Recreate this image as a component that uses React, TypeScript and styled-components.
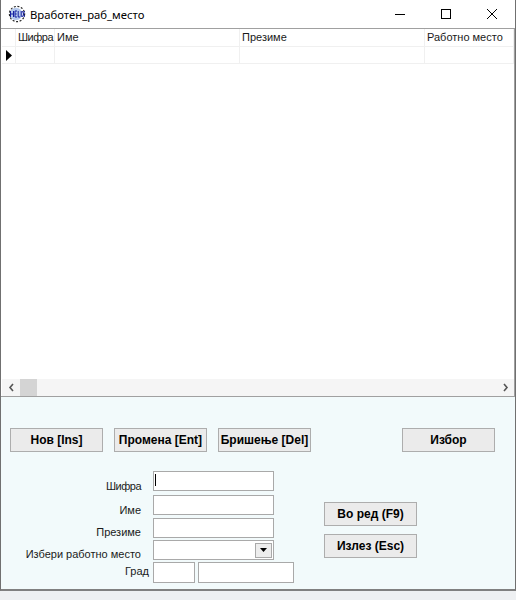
import React from "react";
import styled, { createGlobalStyle } from "styled-components";

const Global = createGlobalStyle`
  html, body { margin: 0; padding: 0; background: #f0f1f3; }
  #root { width: 516px; height: 600px; overflow: hidden; }
  * { box-sizing: border-box; }
`;

const Page = styled.div`
  width: 516px;
  height: 600px;
  background: linear-gradient(#c9ccd0 0, #e6e8ea 4px, #eef0f2 9px);
  font-family: "Liberation Sans", Arial, sans-serif;
`;

const Win = styled.div`
  width: 516px;
  height: 591px;
  display: flex;
  flex-direction: column;
  background: #fff;
  border-left: 1px solid #707070;
  border-right: 1px solid #707070;
  border-bottom: 2px solid #808080;
`;

const TitleBar = styled.div`
  height: 28px;
  flex: none;
  display: flex;
  align-items: center;
  padding-left: 7px;
  background: #fff;
`;

const TitleText = styled.span`
  font-family: "Noto Sans", "Open Sans", sans-serif;
  font-size: 11.3px;
  color: #000;
  margin-left: 4px;
  margin-top: 1px;
`;

const Controls = styled.div`
  margin-left: auto;
  display: flex;
  height: 28px;
`;

const Ctl = styled.div`
  width: 46px;
  display: flex;
  align-items: center;
  justify-content: center;
`;

const GridBox = styled.div`
  height: 369px;
  flex: none;
  display: flex;
  flex-direction: column;
  border-top: 1px solid #a0a0a0;
  border-bottom: 1px solid #a0a0a0;
  border-right: 1px solid #a0a0a0;
  background: #fff;
`;

const Row = styled.div<{ $h: number }>`
  height: ${(p) => p.$h}px;
  flex: none;
  display: flex;
  border-bottom: 1px solid #f0f0f0;
  margin-left: 1px;
`;

const Cell = styled.div<{ $w: number }>`
  width: ${(p) => p.$w}px;
  flex: none;
  border-right: 1px solid #f0f0f0;
  font-size: 11px;
  line-height: 17px;
  color: #1a1a1a;
  padding-left: 2px;
  white-space: nowrap;
  overflow: hidden;
  display: flex;
  align-items: center;
`;

const RowMarker = styled(Cell)`
  padding-left: 4px;
`;

const Tight = styled.span`
  letter-spacing: -0.5px;
`;

const GridFill = styled.div`
  flex: 1;
`;

const ScrollBar = styled.div`
  height: 17px;
  flex: none;
  background: #f5f5f5;
  display: flex;
  align-items: center;
  margin-left: 1px;
`;

const Arrow = styled.div`
  width: 18px;
  height: 17px;
  display: flex;
  align-items: center;
  justify-content: center;
  flex: none;
`;

const Thumb = styled.div`
  width: 17px;
  height: 17px;
  background: #d4d4d4;
  flex: none;
`;

const Spacer = styled.div`
  flex: 1;
`;

const Panel = styled.div`
  flex: 1;
  background: #f2fafb;
  display: flex;
  flex-direction: column;
  padding: 31px 0 0 9px;
`;

const TopButtons = styled.div`
  display: flex;
  gap: 11px;
`;

const Btn = styled.div<{ $ml?: number }>`
  width: 93px;
  height: 24px;
  flex: none;
  margin-left: ${(p) => p.$ml ?? 0}px;
  background: #ebebeb;
  border: 1px solid #adadad;
  display: flex;
  align-items: center;
  justify-content: center;
  font-size: 12px;
  font-weight: 700;
  color: #000;
  white-space: nowrap;
`;

const FormArea = styled.div`
  display: flex;
  margin-top: 19px;
`;

const Fields = styled.div`
  width: 314px;
  flex: none;
  display: flex;
  flex-direction: column;
`;

const FieldRow = styled.div<{ $h: number }>`
  height: ${(p) => p.$h}px;
  display: flex;
  flex: none;
`;

const Label = styled.div<{ $w?: number; $dy?: number }>`
  width: ${(p) => p.$w ?? 131}px;
  flex: none;
  text-align: right;
  font-size: 11px;
  line-height: 13px;
  color: #1a1a1a;
  padding-top: ${(p) => p.$dy ?? 0}px;
  white-space: nowrap;
`;

const Input = styled.div<{ $w: number; $h: number; $ml: number }>`
  width: ${(p) => p.$w}px;
  height: ${(p) => p.$h}px;
  margin-left: ${(p) => p.$ml}px;
  flex: none;
  background: #fff;
  border: 1px solid #a9a9a9;
  display: flex;
  align-items: center;
`;

const Caret = styled.div`
  width: 1px;
  height: 12px;
  background: #000;
  margin: -3px 0 0 1px;
`;

const ComboBtn = styled.div`
  width: 17px;
  height: 15px;
  margin-left: auto;
  margin-right: 1px;
  background: #ededed;
  border: 1px solid #a9a9a9;
  display: flex;
  align-items: center;
  justify-content: center;
`;

const SideButtons = styled.div`
  display: flex;
  flex-direction: column;
  gap: 8px;
  padding-top: 31px;
`;

export default function App() {
  return (
    <Page>
      <Global />
      <Win>
        <TitleBar>
          <svg width="18" height="18" viewBox="0 0 18 18">
            <circle cx="9" cy="9" r="7.6" fill="#fff" stroke="#222" strokeWidth="1.2" strokeDasharray="2 1.6" />
            <circle cx="8" cy="9" r="6.2" fill="#b4c8ec" />
            <path d="M2.5 6V12M5.5 6V12M2.5 9H5.5M7 6V12M7 6H9M7 9H8.7M7 12H9M10.2 6V12H12M13.2 6V12M14.5 6L16.5 12M16.5 6L14.5 12" fill="none" stroke="#1520a0" strokeWidth="1" />
          </svg>
          <TitleText>Вработен_раб_место</TitleText>
          <Controls>
            <Ctl>
              <svg width="10" height="10" viewBox="0 0 10 10"><path d="M0 5.5H10" stroke="#000" strokeWidth="1" /></svg>
            </Ctl>
            <Ctl>
              <svg width="10" height="10" viewBox="0 0 10 10"><rect x="0.5" y="0.5" width="9" height="9" fill="none" stroke="#000" strokeWidth="1" /></svg>
            </Ctl>
            <Ctl>
              <svg width="10" height="10" viewBox="0 0 10 10"><path d="M0 0L10 10M10 0L0 10" stroke="#000" strokeWidth="1" /></svg>
            </Ctl>
          </Controls>
        </TitleBar>
        <GridBox>
          <Row $h={18}>
            <Cell $w={14} />
            <Cell $w={39}><Tight>Шифра</Tight></Cell>
            <Cell $w={185}>Име</Cell>
            <Cell $w={185}>Презиме</Cell>
            <Cell $w={89}>Работно место</Cell>
          </Row>
          <Row $h={17}>
            <RowMarker $w={14}>
              <svg width="7" height="11" viewBox="0 0 7 11"><path d="M0 0L6 5.5L0 11Z" fill="#000" /></svg>
            </RowMarker>
            <Cell $w={39} />
            <Cell $w={185} />
            <Cell $w={185} />
            <Cell $w={89} />
          </Row>
          <GridFill />
          <ScrollBar>
            <Arrow>
              <svg width="7" height="9" viewBox="0 0 7 9"><path d="M5 1L2 4.5L5 8" fill="none" stroke="#555" strokeWidth="1.6" /></svg>
            </Arrow>
            <Thumb />
            <Spacer />
            <Arrow>
              <svg width="7" height="9" viewBox="0 0 7 9"><path d="M2 1L5 4.5L2 8" fill="none" stroke="#555" strokeWidth="1.6" /></svg>
            </Arrow>
          </ScrollBar>
        </GridBox>
        <Panel>
          <TopButtons>
            <Btn>Нов [Ins]</Btn>
            <Btn>Промена [Ent]</Btn>
            <Btn>Бришење [Del]</Btn>
            <Btn $ml={80}>Избор</Btn>
          </TopButtons>
          <FormArea>
            <Fields>
              <FieldRow $h={24}>
                <Label $dy={9}><Tight>Шифра</Tight></Label>
                <Input $w={121} $h={20} $ml={12}><Caret /></Input>
              </FieldRow>
              <FieldRow $h={23}>
                <Label $dy={9}>Име</Label>
                <Input $w={121} $h={20} $ml={12} />
              </FieldRow>
              <FieldRow $h={22}>
                <Label $dy={8}>Презиме</Label>
                <Input $w={121} $h={20} $ml={12} />
              </FieldRow>
              <FieldRow $h={22}>
                <Label $dy={8}>Избери работно место</Label>
                <Input $w={121} $h={20} $ml={12}>
                  <ComboBtn>
                    <svg width="7" height="4" viewBox="0 0 7 4"><path d="M0 0H7L3.5 4Z" fill="#000" /></svg>
                  </ComboBtn>
                </Input>
              </FieldRow>
              <FieldRow $h={21}>
                <Label $w={139} $dy={3}>Град</Label>
                <Input $w={42} $h={21} $ml={4} />
                <Input $w={96} $h={21} $ml={3} />
              </FieldRow>
            </Fields>
            <SideButtons>
              <Btn>Во ред (F9)</Btn>
              <Btn>Излез (Esc)</Btn>
            </SideButtons>
          </FormArea>
        </Panel>
      </Win>
    </Page>
  );
}
